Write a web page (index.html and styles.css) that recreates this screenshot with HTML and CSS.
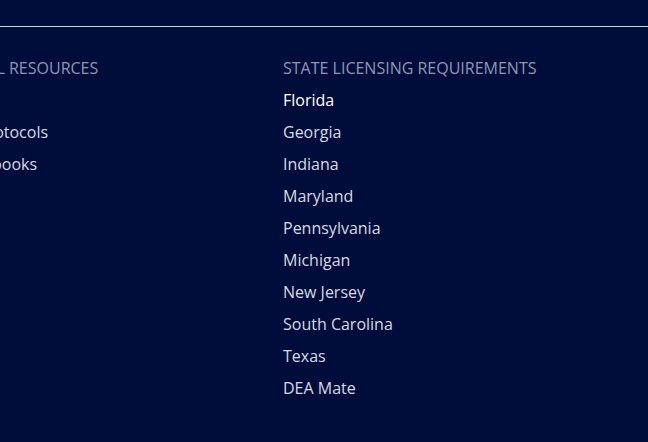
FILE: index.html
```html
<!DOCTYPE html>
<html>
<head>
<meta charset="utf-8">
<link rel="stylesheet" href="styles.css">
</head>
<body>
<footer class="footer">
  <div class="top"></div>
  <div class="rule"></div>
  <div class="cols">
    <div class="col">
      <div class="col-title">ALL RESOURCES</div>
      <ul class="links">
        <li>CE</li>
        <li>Protocols</li>
        <li>E-books</li>
      </ul>
    </div>
    <div class="col">
      <div class="col-title">STATE LICENSING REQUIREMENTS</div>
      <ul class="links">
        <li class="active">Florida</li>
        <li>Georgia</li>
        <li>Indiana</li>
        <li>Maryland</li>
        <li>Pennsylvania</li>
        <li>Michigan</li>
        <li>New Jersey</li>
        <li>South Carolina</li>
        <li>Texas</li>
        <li>DEA Mate</li>
      </ul>
    </div>
  </div>
</footer>
</body>
</html>
```
FILE: styles.css
```css
html, body {
  margin: 0;
  padding: 0;
  background: #000d3a;
  height: 100%;
  overflow: hidden;
}
.footer {
  font-family: "Open Sans", "Liberation Sans", sans-serif;
  font-size: 16px;
}
.top {
  height: 26px;
}
.rule {
  height: 1px;
  background: #d4d4d6;
}
.cols {
  display: grid;
  grid-template-columns: 305px 1fr;
  margin-left: -22px;
  padding-top: 25px;
}
.col-title {
  color: #8f97b4;
  line-height: 32px;
  white-space: nowrap;
}
.links {
  list-style: none;
  margin: 0;
  padding: 0;
}
.links li {
  color: #d6dae5;
  line-height: 32px;
  white-space: nowrap;
}
.links li.active {
  color: #ffffff;
}
```
